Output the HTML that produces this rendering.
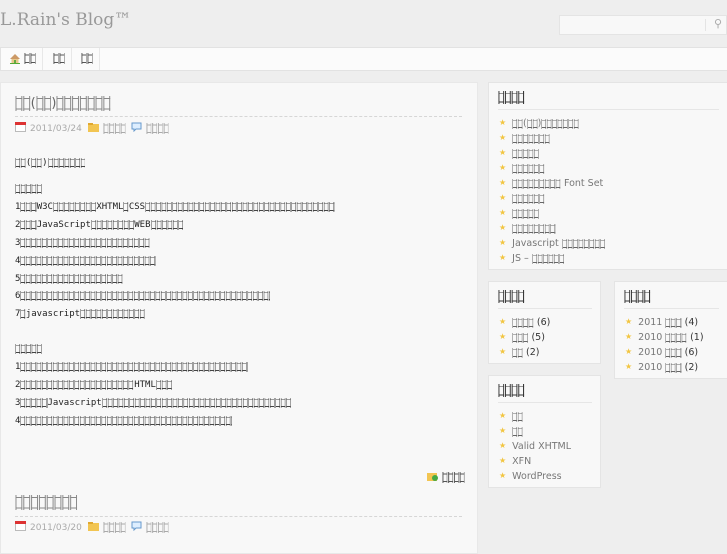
<!DOCTYPE html>
<html><head><meta charset="utf-8"><style>
body{margin:0;width:727px;height:545px;overflow:hidden;background:#eeeeee;font-family:"DejaVu Sans","Liberation Sans",sans-serif;color:#444;position:relative}
i{font-style:normal;font-family:"DejaVu Sans Mono",monospace;color:transparent;--c:#555;--bg:#f8f8f8;
background-image:
linear-gradient(to right,transparent 0.05em,var(--c) 0.05em 0.13em,transparent 0.13em 0.49em,var(--c) 0.49em 0.57em,transparent 0.57em),
linear-gradient(to right,var(--bg) 0.05em,transparent 0.05em 0.57em,var(--bg) 0.57em),
linear-gradient(to bottom,transparent 14%,var(--c) 14% 21%,transparent 21% 82%,var(--c) 82% 89%,transparent 89%);
background-size:0.602em 100%;background-repeat:repeat-x}
#title{position:absolute;left:0;top:10px;font-family:"DejaVu Serif","Liberation Serif",serif;font-size:17px;color:#999}
#search{position:absolute;left:559px;top:15px;width:166px;height:18px;background:#f8f8f8;border:1px solid #e4e4e4}
#nav{position:absolute;left:0;top:47px;width:726px;height:22px;background:#fbfbfb;border:1px solid #e2e2e2}
#nav i{position:absolute;top:5px;font-size:10px;--bg:#fbfbfb}
.sep{position:absolute;top:0;width:1px;height:22px;background:#e8e8e8}
#main{position:absolute;left:0;top:82px;width:476px;height:470px;background:#f8f8f8;border:1px solid #e8e8e8}
.ptitle{position:absolute;left:15px;font-size:13px;color:#666}
.ptitle i{--c:#888}
.dash{position:absolute;left:15px;width:447px;border-top:1px dashed #d6d6d6}
.meta{position:absolute;left:15px;font-size:9px;color:#aaa;white-space:nowrap}
.meta i{--c:#aaa;font-size:9.5px}
.ic{display:inline-block;width:11px;height:10px;vertical-align:-1px;margin-right:4px}
.body{position:absolute;left:15px;font-family:"DejaVu Sans Mono",monospace;font-size:9px;color:#222;white-space:nowrap}
.body i{--c:#444}
.box{position:absolute;background:#f8f8f8;border:1px solid #e4e4e4}
.box h3{margin:0;position:absolute;left:9px;top:8px;font-size:11px;font-weight:normal;color:#222}
.box h3 i{--c:#333}
.box .hl{position:absolute;left:9px;right:8px;top:26px;border-top:1px solid #e6e6e6}
.box ul{list-style:none;margin:0;padding:0;position:absolute;left:10px;top:32px}
.box li{font-size:9.5px;color:#777;height:15px;white-space:nowrap;line-height:15px}
.box li:before{content:"★";color:#f2c540;font-size:8px;margin-right:6px;vertical-align:1px}
.box li b{font-weight:normal;color:#333}
.box li i{font-size:9px;--c:#666}
</style></head><body>
<div id="title">L.Rain's Blog™</div>
<div id="search"><span style="position:absolute;right:4px;top:1px;font-size:11px;color:#aaa">⚲</span><span style="position:absolute;right:20px;top:3px;width:1px;height:12px;background:#e4e4e4"></span></div>
<div id="nav">
<svg style="position:absolute;left:8px;top:5px" width="12" height="11" viewBox="0 0 12 11"><path d="M1 6 L6 1 L11 6 Z" fill="#c96"/><rect x="2.5" y="6" width="7" height="4" fill="#e8c88a"/><rect x="5" y="7" width="2" height="3" fill="#6a4"/><rect x="1" y="10" width="10" height="1" fill="#5a3"/></svg>
<i style="left:23px">□□</i><div class="sep" style="left:41px"></div>
<i style="left:52px">□□</i><div class="sep" style="left:70px"></div>
<i style="left:80px">□□</i><div class="sep" style="left:98px"></div>
</div>
<div id="main"></div>
<div class="ptitle" style="top:96px"><i>□□</i>(<i>□□</i>)<i>□□□□□□□</i></div>
<div class="dash" style="top:116px"></div>
<div class="meta" style="top:122px"><svg class="ic" viewBox="0 0 11 10"><rect x="0.5" y="0.5" width="10" height="9" fill="#fff" stroke="#bbb"/><rect x="0" y="0" width="11" height="3" fill="#d33"/></svg>2011/03/24 &nbsp;<svg class="ic" viewBox="0 0 11 10"><rect x="0" y="2" width="11" height="8" fill="#f2c552"/><rect x="0" y="1" width="5" height="2" fill="#e0a830"/></svg><i>□□□□</i> &nbsp;<svg class="ic" viewBox="0 0 11 10"><path d="M1 1h9v6H5l-2 2V7H1z" fill="#def" stroke="#69c"/></svg><i>□□□□</i></div>
<div class="body" style="top:158px"><i>□□</i>(<i>□□</i>)<i>□□□□□□□</i></div>
<div class="body" style="top:184px"><i>□□□□□</i></div>
<div class="body" style="top:202px">1<i>□□□</i>W3C<i>□□□□□□□□</i>XHTML<i>□</i>CSS<i>□□□□□□□□□□□□□□□□□□□□□□□□□□□□□□□□□□□</i></div>
<div class="body" style="top:220px">2<i>□□□</i>JavaScript<i>□□□□□□□□</i>WEB<i>□□□□□□</i></div>
<div class="body" style="top:238px">3<i>□□□□□□□□□□□□□□□□□□□□□□□□</i></div>
<div class="body" style="top:256px">4<i>□□□□□□□□□□□□□□□□□□□□□□□□□</i></div>
<div class="body" style="top:274px">5<i>□□□□□□□□□□□□□□□□□□□</i></div>
<div class="body" style="top:291px">6<i>□□□□□□□□□□□□□□□□□□□□□□□□□□□□□□□□□□□□□□□□□□□□□□</i></div>
<div class="body" style="top:309px">7<i>□</i>javascript<i>□□□□□□□□□□□□</i></div>
<div class="body" style="top:344px"><i>□□□□□</i></div>
<div class="body" style="top:362px">1<i>□□□□□□□□□□□□□□□□□□□□□□□□□□□□□□□□□□□□□□□□□□</i></div>
<div class="body" style="top:380px">2<i>□□□□□□□□□□□□□□□□□□□□□</i>HTML<i>□□□</i></div>
<div class="body" style="top:398px">3<i>□□□□□</i>Javascript<i>□□□□□□□□□□□□□□□□□□□□□□□□□□□□□□□□□□□</i></div>
<div class="body" style="top:416px">4<i>□□□□□□□□□□□□□□□□□□□□□□□□□□□□□□□□□□□□□□□</i></div>
<div class="meta" style="top:471px;left:427px"><svg class="ic" viewBox="0 0 11 10"><rect x="0" y="2" width="10" height="8" fill="#f2c552"/><circle cx="8" cy="7" r="3" fill="#4a4"/></svg><i style="--c:#555">□□□□</i></div>
<div class="ptitle" style="top:495px"><i>□□□□□□□□</i></div>
<div class="dash" style="top:516px"></div>
<div class="meta" style="top:521px"><svg class="ic" viewBox="0 0 11 10"><rect x="0.5" y="0.5" width="10" height="9" fill="#fff" stroke="#bbb"/><rect x="0" y="0" width="11" height="3" fill="#d33"/></svg>2011/03/20 &nbsp;<svg class="ic" viewBox="0 0 11 10"><rect x="0" y="2" width="11" height="8" fill="#f2c552"/><rect x="0" y="1" width="5" height="2" fill="#e0a830"/></svg><i>□□□□</i> &nbsp;<svg class="ic" viewBox="0 0 11 10"><path d="M1 1h9v6H5l-2 2V7H1z" fill="#def" stroke="#69c"/></svg><i>□□□□</i></div>

<div class="box" style="left:488px;top:82px;width:238px;height:186px"><h3><i>□□□□</i></h3><div class="hl"></div><ul>
<li><i>□□</i>(<i>□□</i>)<i>□□□□□□□</i></li><li><i>□□□□□□□</i></li><li><i>□□□□□</i></li><li><i>□□□□□□</i></li><li><i>□□□□□□□□□</i> Font Set</li><li><i>□□□□□□</i></li><li><i>□□□□□</i></li><li><i>□□□□□□□□</i></li><li>Javascript <i>□□□□□□□□</i></li><li>JS – <i>□□□□□□</i></li></ul></div>
<div class="box" style="left:488px;top:281px;width:111px;height:81px"><h3><i>□□□□</i></h3><div class="hl"></div><ul>
<li><b><i>□□□□</i> (6)</b></li><li><b><i>□□□</i> (5)</b></li><li><b><i>□□</i> (2)</b></li></ul></div>
<div class="box" style="left:614px;top:281px;width:112px;height:96px"><h3><i>□□□□</i></h3><div class="hl"></div><ul>
<li>2011 <b><i>□□□</i> (4)</b></li><li>2010 <b><i>□□□□</i> (1)</b></li><li>2010 <b><i>□□□</i> (6)</b></li><li>2010 <b><i>□□□</i> (2)</b></li></ul></div>
<div class="box" style="left:488px;top:375px;width:111px;height:111px"><h3><i>□□□□</i></h3><div class="hl"></div><ul>
<li><i>□□</i></li><li><i>□□</i></li><li>Valid XHTML</li><li>XFN</li><li>WordPress</li></ul></div>
</body></html>
